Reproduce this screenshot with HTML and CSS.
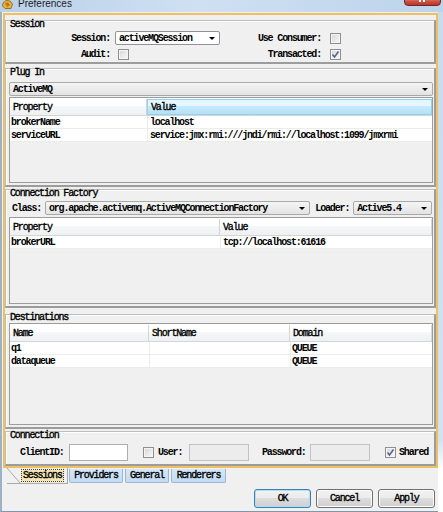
FILE: index.html
```html
<!DOCTYPE html>
<html>
<head>
<meta charset="utf-8">
<title>Preferences</title>
<link rel="stylesheet" href="styles.css">
</head>
<body>
<div class="window">
  <div class="titlebar">
    <svg class="appicon" width="11" height="9" viewBox="0 0 11 9">
      <path d="M1 3 L4 0.5 L8 1 L10.5 4 L9 8.5 L3 8.5 L0.5 6 Z" fill="#e8b23a" stroke="#8a5a12" stroke-width="0.8"/>
      <path d="M3 3 L6 2.5 L8 5 L5 7 Z" fill="#b7781c"/>
    </svg>
    <span class="title">Preferences</span>
    <div class="close"><span class="close-x"></span></div>
  </div>
  <div class="client">
    <div class="tabpanel">
      <section class="group g-session">
        <div class="gtitle">Session</div>
        <div class="session-grid">
          <span class="lbl lbl1">Session:</span>
          <div class="combo edit"><span class="ctext">activeMQSession</span><i class="arrow"></i></div>
          <span class="lbl lbl2">Use Consumer:</span>
          <span class="cb"></span>
          <span class="lbl lbl1">Audit:</span>
          <span class="cbwrap"><span class="cb"></span></span>
          <span class="lbl lbl2">Transacted:</span>
          <span class="cb"><svg width="9" height="9" viewBox="0 0 9 9"><path d="M1.5 4.5 L3.5 7 L7.5 1.5" fill="none" stroke="#4c5f8e" stroke-width="1.4"/></svg></span>
        </div>
      </section>

      <section class="group g-plugin">
        <div class="gtitle">Plug In</div>
        <div class="combo ro full"><span class="ctext">ActiveMQ</span><i class="arrow"></i></div>
        <div class="table t-plugin">
          <div class="trow thead">
            <div class="th">Property</div>
            <div class="th hot">Value</div>
          </div>
          <div class="trow">
            <div class="td">brokerName</div>
            <div class="td">localhost</div>
          </div>
          <div class="trow">
            <div class="td">serviceURL</div>
            <div class="td">service:jmx:rmi:///jndi/rmi://localhost:1099/jmxrmi</div>
          </div>
        </div>
      </section>

      <section class="group g-cf">
        <div class="gtitle">Connection Factory</div>
        <div class="cf-row">
          <span class="lbl cls">Class:</span>
          <div class="combo ro cls-combo"><span class="ctext">org.apache.activemq.ActiveMQConnectionFactory</span><i class="arrow"></i></div>
          <span class="lbl loader">Loader:</span>
          <div class="combo ro loader-combo"><span class="ctext">Active5.4</span><i class="arrow"></i></div>
        </div>
        <div class="table t-cf">
          <div class="trow thead">
            <div class="th">Property</div>
            <div class="th">Value</div>
          </div>
          <div class="trow">
            <div class="td">brokerURL</div>
            <div class="td">tcp://localhost:61616</div>
          </div>
        </div>
      </section>

      <section class="group g-dest">
        <div class="gtitle">Destinations</div>
        <div class="table t-dest">
          <div class="trow thead">
            <div class="th">Name</div>
            <div class="th">ShortName</div>
            <div class="th">Domain</div>
          </div>
          <div class="trow">
            <div class="td">q1</div>
            <div class="td"></div>
            <div class="td dom">QUEUE</div>
          </div>
          <div class="trow">
            <div class="td">dataqueue</div>
            <div class="td"></div>
            <div class="td dom">QUEUE</div>
          </div>
        </div>
      </section>

      <section class="group g-conn">
        <div class="gtitle">Connection</div>
        <div class="conn-row">
          <span class="lbl cid">ClientID:</span>
          <span class="input white cid-in"></span>
          <span class="cb user-cb"></span>
          <span class="lbl user">User:</span>
          <span class="input dis user-in"></span>
          <span class="lbl pw">Password:</span>
          <span class="input dis pw-in"></span>
          <span class="cb shared-cb"><svg width="9" height="9" viewBox="0 0 9 9"><path d="M1.5 4.5 L3.5 7 L7.5 1.5" fill="none" stroke="#4c5f8e" stroke-width="1.4"/></svg></span>
          <span class="lbl shared">Shared</span>
        </div>
      </section>
    </div>

    <div class="tabstrip">
      <div class="tab sel">
        <svg class="slant" width="14" height="16" viewBox="0 0 14 16"><path d="M0 0 L13.5 15.5" stroke="#a9a9a9" fill="none"/></svg>
        <span class="focus">Sessions</span>
      </div>
      <div class="tab t-prov">Providers</div>
      <div class="tab t-gen">General</div>
      <div class="tab t-rend">Renderers</div>
    </div>

    <div class="buttons">
      <button class="btn def">OK</button>
      <button class="btn">Cancel</button>
      <button class="btn">Apply</button>
    </div>
  </div>
</div>
</body>
</html>
```

FILE: styles.css
```css
* { box-sizing: border-box; }
html, body { margin: 0; padding: 0; }
body {
  width: 443px;
  height: 512px;
  overflow: hidden;
  background: #fff;
  font-family: "Liberation Mono", "DejaVu Sans Mono", monospace;
  font-size: 10px;
  font-weight: bold;
  letter-spacing: -1.15px;
  color: #000;
}
.window {
  width: 443px;
  height: 512px;
  display: flex;
  flex-direction: column;
  background: linear-gradient(#c7dbef 0, #d3e2f2 440px, #fff 470px);
}

/* title bar */
.titlebar {
  height: 12px;
  flex: none;
  display: flex;
  align-items: flex-start;
  position: relative;
  overflow: hidden;
  background: linear-gradient(90deg, #b9d0e9 0, #cfe0f2 45%, #bcd3eb 100%);
}
.appicon { flex: none; margin: 0 0 0 2px; }
.title {
  font-family: "Liberation Sans", sans-serif;
  font-weight: normal;
  letter-spacing: 0;
  font-size: 10px;
  line-height: 11px;
  margin: -2px 0 0 5px;
  color: #1b1b1b;
}
.close {
  position: absolute;
  left: 404px;
  top: -4px;
  width: 37px;
  height: 10px;
  border: 1px solid #6e2a22;
  border-radius: 0 0 4px 4px;
  background: linear-gradient(#e9a79c, #cf5040 55%, #b3372a);
}
.close-x {
  position: absolute;
  left: 14px;
  top: 2px;
  width: 6px;
  height: 3px;
  border-left: 2px solid #fff;
  border-right: 2px solid #fff;
}

/* client */
.client {
  width: 438px;
  flex: 1;
  display: flex;
  flex-direction: column;
  background: #f0f0f0;
  border-left: 2px solid #9cb0c6;
  border-bottom: 1px solid #7f96ae;
}
.tabpanel {
  margin: 1px 0 0 1px;
  width: 435px;
  height: 455px;
  flex: none;
  border: 2px solid #efc061;
  display: flex;
  flex-direction: column;
}

/* groups */
.group {
  width: 431px;
  flex: none;
  display: flex;
  flex-direction: column;
  padding: 0 2px 2px 3px;
  border: 1px solid #bdbdbd;
  border-right: 2px solid #9c9c9c;
  border-bottom: 2px solid #9c9c9c;
  box-shadow: inset 1px 1px 0 #fff;
}
.gtitle {
  height: 10px;
  line-height: 8px;
  padding-left: 1px;
  flex: none;
  font-weight: normal;
  -webkit-text-stroke: 0.35px #000;
}
.g-session { margin-top: 5px; height: 44px; }
.g-plugin { margin-top: 4px; height: 119px; }
.g-cf { margin-top: 2px; height: 119px; }
.g-dest { margin-top: 6px; height: 115px; }
.g-conn { margin-top: 2px; height: 35px; }
.g-dest .gtitle { height: 8px; line-height: 6px; }

.lbl { white-space: nowrap; }

/* session grid */
.session-grid {
  display: grid;
  grid-template-columns: 106px 105px 110px 11px;
  grid-template-rows: 14px 14px;
  row-gap: 2px;
  align-items: center;
}
.lbl1 { text-align: right; padding-right: 5px; }
.lbl2 { text-align: right; padding-right: 9px; }
.cbwrap { display: flex; padding-left: 3px; }

/* combos */
.combo {
  height: 14px;
  display: flex;
  align-items: center;
  position: relative;
  padding-left: 3px;
  border: 1px solid #a9a9a9;
  border-radius: 2px;
  white-space: nowrap;
}
.combo.edit { background: #fff; border-color: #8f9298; }
.combo.ro { background: linear-gradient(#f5f5f5, #ececec 50%, #e3e3e3); }
.combo.full { margin-top: 3px; width: 424px; }
.ctext { flex: 1; overflow: hidden; }
.arrow {
  flex: none;
  width: 0;
  height: 0;
  margin-right: 4px;
  border-left: 3px solid transparent;
  border-right: 3px solid transparent;
  border-top: 3px solid #000;
}

/* checkboxes */
.cb {
  width: 11px;
  height: 11px;
  flex: none;
  display: flex;
  align-items: center;
  justify-content: center;
  border: 1px solid #8e8f8f;
  background: linear-gradient(135deg, #d6d6d6, #f9f9f9);
  box-shadow: inset 0 0 0 1px #f4f4f4;
}

/* tables */
.table {
  flex: 1;
  width: 424px;
  margin-top: 1px;
  border: 1px solid #9c9c9c;
  background: #f0f0f0;
  display: flex;
  flex-direction: column;
}
.t-cf { margin-top: 2px; }
.t-dest { margin-top: 0; }
.trow {
  display: grid;
  height: 13px;
  background: #fff;
  border-bottom: 1px solid #ececec;
  align-items: center;
  white-space: nowrap;
}
.trow.thead {
  height: 18px;
  background: linear-gradient(#ffffff 0, #ffffff 45%, #f6f7f8 45%, #eff0f2 100%);
  border-bottom: 1px solid #d5d5d5;
  border-top: 1px solid #fff;
}
.t-plugin .trow { grid-template-columns: 137px 1fr; }
.t-cf .trow { grid-template-columns: 210px 1fr; }
.t-dest .trow { grid-template-columns: 139px 141px 1fr; }
.th {
  height: 100%;
  display: flex;
  align-items: center;
  padding-left: 3px;
  border-right: 1px solid #d5d5d5;
  font-weight: normal;
  -webkit-text-stroke: 0.35px #000;
}
.th.hot {
  background: linear-gradient(#e5f6fe 0, #e5f6fe 45%, #c6eafc 45%, #b3e1f8 100%);
  border: 1px solid #8fd2f0;
}
.td {
  height: 100%;
  display: flex;
  align-items: center;
  padding-left: 1px;
}
.td + .td { border-left: 1px solid #ececec; padding-left: 2px; }
.td.dom { padding-left: 1px; }

/* connection factory row */
.cf-row {
  display: flex;
  align-items: center;
  height: 14px;
  margin-top: 1px;
}
.cls { width: 36px; padding-left: 3px; }
.cls-combo { width: 266px; }
.loader { width: 43px; padding-left: 5px; }
.loader-combo { width: 79px; }

/* connection row */
.conn-row {
  display: flex;
  align-items: center;
  height: 20px;
}
.input { height: 17px; flex: none; }
.input.white { background: #fff; border: 1px solid #abadb3; }
.input.dis { background: #ececec; border: 1px solid #c2c2c2; }
.cid { width: 60px; padding-left: 11px; }
.cid-in { width: 59px; }
.user-cb { margin-left: 15px; }
.user { width: 35px; padding-left: 4px; }
.user-in { width: 60px; }
.pw { width: 61px; padding-left: 13px; }
.pw-in { width: 60px; }
.shared-cb { margin-left: 15px; }
.shared { padding-left: 3px; }

/* tabs */
.tabstrip {
  height: 16px;
  flex: none;
  display: flex;
  align-items: flex-start;
  padding-left: 5px;
}
.tab {
  height: 14px;
  margin-top: 1px;
  display: flex;
  align-items: center;
  justify-content: center;
  white-space: nowrap;
  background: linear-gradient(#d6e8fa, #c2daf3);
  border: 1px solid #9eb6d0;
  border-top: none;
  border-radius: 0 0 2px 2px;
  font-weight: normal;
  -webkit-text-stroke: 0.35px #000;
}
.tab.sel {
  width: 61px;
  height: 16px;
  margin-top: 0;
  justify-content: flex-start;
  background: #f0f0f0;
  border: none;
  border-right: 1px solid #a9a9a9;
  border-bottom: 1px solid #a9a9a9;
  border-radius: 0;
  position: relative;
}
.slant { flex: none; align-self: flex-start; margin-bottom: -1px; }
.focus {
  height: 13px;
  line-height: 11px;
  padding: 0 1px;
  border: 1px dotted #444;
  background: #f6e6b6;
}
.t-prov { width: 54px; margin-left: 1px; }
.t-gen { width: 44px; margin-left: 2px; }
.t-rend { width: 55px; margin-left: 2px; }

/* buttons */
.buttons {
  display: flex;
  justify-content: flex-end;
  gap: 5px;
  margin-top: 5px;
  padding-right: 3px;
}
.btn {
  width: 57px;
  height: 19px;
  padding: 0;
  font: inherit;
  font-weight: normal;
  -webkit-text-stroke: 0.35px #000;
  letter-spacing: -1.15px;
  color: #000;
  border: 1px solid #707070;
  border-radius: 3px;
  background: linear-gradient(#f2f2f2 0, #ebebeb 50%, #dddddd 50%, #cfcfcf 100%);
  box-shadow: inset 0 0 0 1px #fcfcfc;
}
.btn.def {
  border-color: #3c7fb1;
  box-shadow: inset 0 0 0 1px #b0def6;
}
```
